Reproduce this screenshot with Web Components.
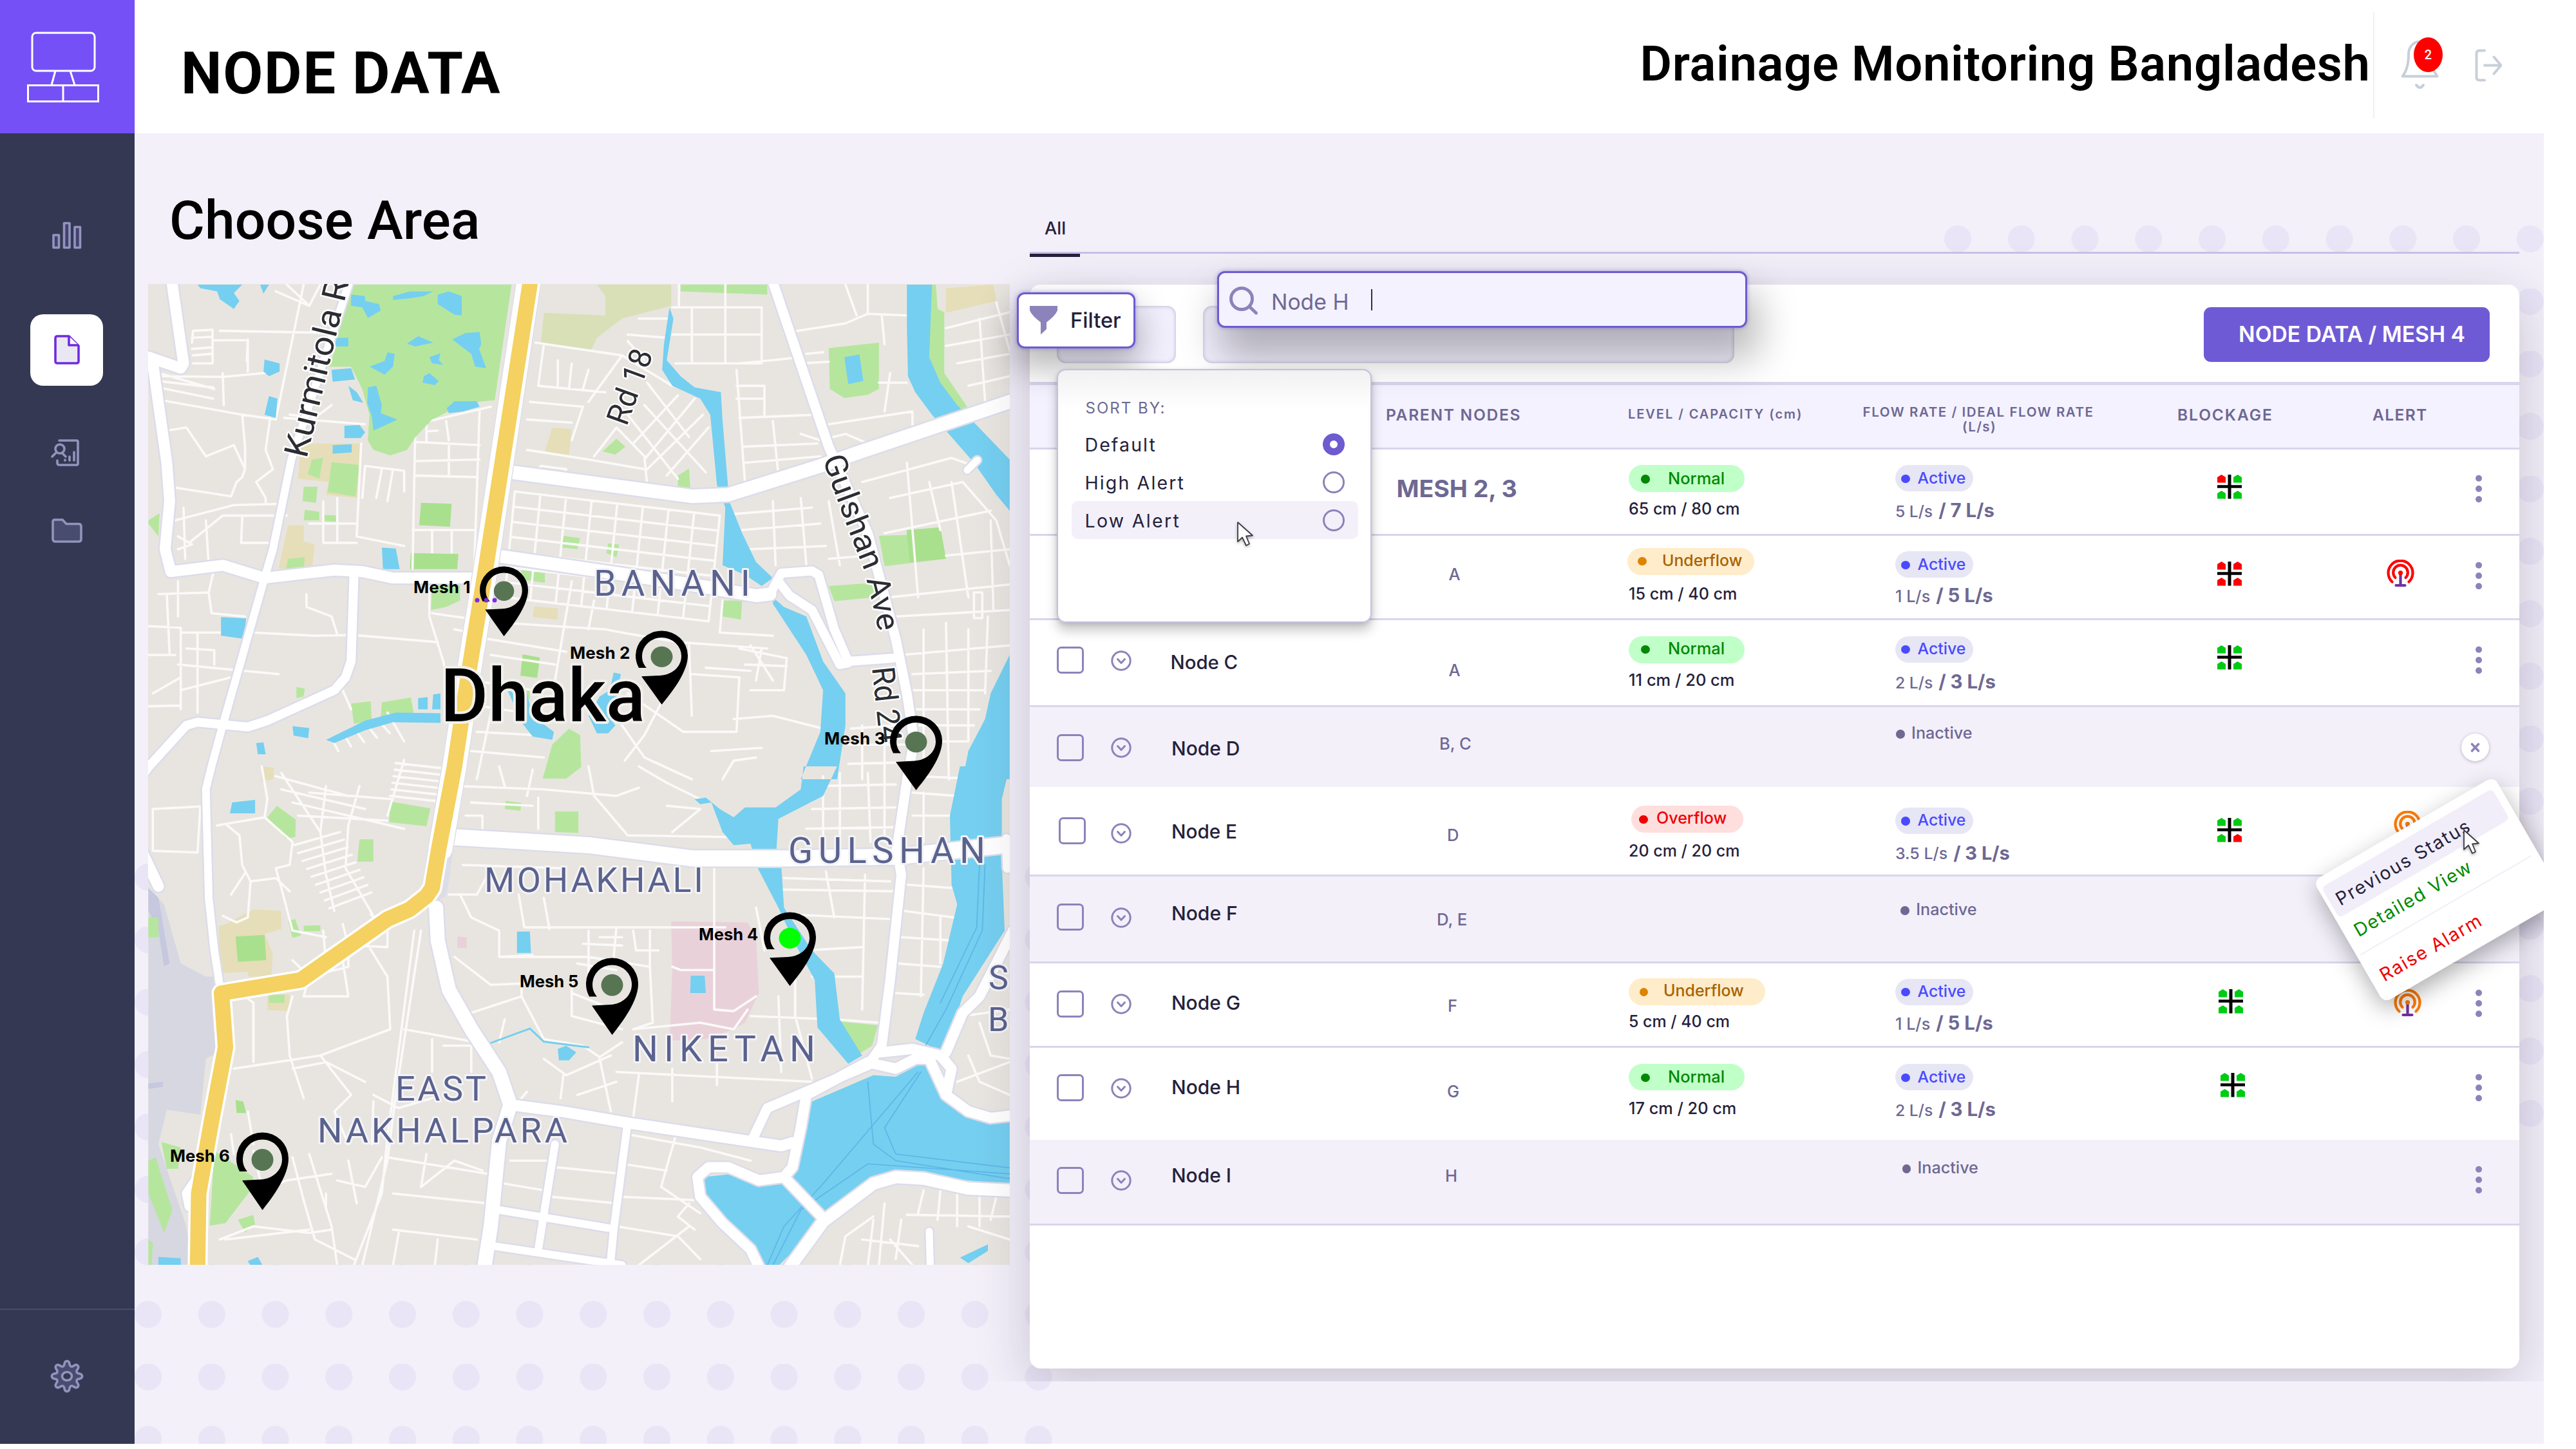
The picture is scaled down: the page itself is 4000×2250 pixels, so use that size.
<!DOCTYPE html>
<html lang="en">
<head>
<meta charset="utf-8">
<title>Node Data</title>
<style>
html,body{margin:0;background:#fff;}
body{font-family:Inter,"Liberation Sans",sans-serif;width:4000px;height:2250px;overflow:hidden;}
</style>
</head>
<body>
<app-shell></app-shell>
<script>
const BASE = { Inter: .864, Roboto: .8415 };
const ctx = document.createElement('canvas').getContext('2d');
const make = (el, css, html) => {
  const r = el.attachShadow({ mode: 'open' });
  r.innerHTML = `<style>*{box-sizing:border-box}${css}</style>${html}`;
  return r;
};

/* Single line of text. s = size, wt = weight, c = colour, f = family,
   w = width of the drawn glyphs, x = left inset, mt = space above.
   The width is reached by scaling the size a little; with "tr", by letter spacing alone. */
class UiText extends HTMLElement {
  connectedCallback() {
    if (this.shadowRoot) return;
    const a = n => this.getAttribute(n);
    const s = +a('s'), wt = a('wt') || 500, f = a('f') || 'Inter', txt = this.textContent;
    ctx.font = `${wt} ${s}px ${f}`;
    const m = ctx.measureText(txt), B = BASE[f];
    const side = m.width - m.actualBoundingBoxRight - m.actualBoundingBoxLeft;
    make(this, `:host{display:block;flex:none;width:max-content;white-space:pre;line-height:1;
      font-family:${f},sans-serif;font-size:var(--fs,${s}px);font-weight:${wt};color:${a('c') || 'inherit'};font-optical-sizing:none;
      letter-spacing:var(--ls,0px);margin-left:${((+a('x') || 0) + m.actualBoundingBoxLeft).toFixed(2)}px;
      margin-right:calc(-1 * var(--ls,0px));margin-top:calc(${(+a('mt') || 0).toFixed(2)}px + var(--up,0px));margin-bottom:var(--dn,0px);}`, `<slot></slot>`);
    if (a('w') && txt.length > 1) {
      const nat = (parseFloat(getComputedStyle(this).width) || m.width) - side, w = +a('w');
      const k = this.hasAttribute('tr') ? 1 : Math.min(1.08, Math.max(.95, w / nat));
      const d = s - s * k;
      this.style.setProperty('--fs', (s * k).toFixed(3) + 'px');
      this.style.setProperty('--up', (B * d).toFixed(3) + 'px');
      this.style.setProperty('--dn', ((1 - B) * d).toFixed(3) + 'px');
      this.style.setProperty('--ls', ((w - nat * k) / (txt.length - 1)).toFixed(3) + 'px');
    }
  }
}
customElements.define('ui-text', UiText);

/* Vertical run of texts whose baselines are given from the top of the run. */
const T = (txt, s, wt, c, w, o = {}) =>
  `<ui-text ${o.tr || o.f ? 'tr ' : ''}s="${s}" wt="${wt}" c="${c}" w="${w}" f="${o.f || 'Inter'}" x="${o.x || 0}" mt="${o.b === undefined ? (o.mt || 0) : o.b - (BASE[o.f || 'Inter']) * s}">${txt}</ui-text>`;

class SideNav extends HTMLElement {
  connectedCallback() {
    make(this, `:host{display:flex;flex-direction:column;width:209px;height:2242px;background:#343852;}
      .logo{height:207px;background:#7550f7;flex:none}
      svg{display:block}
      nav{flex:1;display:flex;flex-direction:column;align-items:center;padding-top:134px}
      .on{width:113px;height:111px;border-radius:20px;background:#fff;margin-top:97px;margin-left:-2px;display:flex;align-items:center;justify-content:center;padding-bottom:2px}
      .foot{height:210px;border-top:2px solid #484c6e;display:flex;justify-content:center;padding:76px 2px 0 0}
      .i{fill:#484c6e;stroke:#9195bd;stroke-width:3.6;stroke-linejoin:round;stroke-linecap:round}`,
    `<div class="logo"><svg width="209" height="207" fill="none" stroke="#fff" stroke-width="3">
        <rect x="50" y="51" width="97" height="59" rx="6"/><path d="M86 110L80 132M109 110L116 132"/>
        <rect x="43.500" y="132.500" width="109" height="25"/><path d="M98 132V158"/></svg></div>
     <nav>
      <svg width="50" height="50" class="i" style="fill:#46406f;margin-left:-2px">
        <rect x="4" y="24" width="8.500" height="19.500"/><rect x="20.500" y="5.500" width="8.500" height="38"/><rect x="37" y="11.500" width="8.500" height="32"/></svg>
      <div class="on"><svg width="44" height="48" viewBox="0 0 44 48" fill="#e9e8f2" stroke="#6f2be2" stroke-width="3.600" stroke-linejoin="round">
        <path d="M6 3H24L39 18V42Q39 45 36 45H6Q3 45 3 42V6Q3 3 6 3Z" transform="translate(1 0)"/><path d="M24 3V17H39" fill="#fff" transform="translate(1 0)"/></svg></div>
      <svg width="46" height="44" viewBox="0 0 46 44" style="margin-top:82px;margin-left:-8px" fill="none" stroke="#9195bd" stroke-width="3.600" stroke-linejoin="round" stroke-linecap="round">
        <path d="M14 3H41Q43 3 43 5V39Q43 41 41 41H14Q11 41 11 38V34"/><circle cx="15" cy="16" r="7"/><path d="M10 21L3 28M18 22L24 28"/><path d="M24 34V33M31 34V28M38 34V21" transform="translate(-1 0)"/></svg>
      <svg width="50" height="40" class="i" style="margin-top:79px;margin-left:-1px"><path d="M6 3H18L24 9.500H43Q47 9.500 47 13.500V33Q47 37 43 37H7Q3 37 3 33V6Q3 3 6 3Z"/></svg>
     </nav>
     <div class="foot"><svg width="54" height="54" viewBox="-27 -27 54 54" class="i" id="g"></svg></div>`);
    let d = '';
    for (let i = 0; i <= 128; i++) {
      const t = i / 128 * Math.PI * 2, v = Math.cos(8 * t);
      const r = 20 + 3.6 * Math.sign(v) * Math.pow(Math.abs(v), .6);
      d += `${i ? 'L' : 'M'}${(r * Math.cos(t)).toFixed(2)} ${(r * Math.sin(t)).toFixed(2)}`;
    }
    this.shadowRoot.getElementById('g').innerHTML = `<path d="${d}Z"/><ellipse rx="7.500" ry="6.500" fill="#343852"/>`;
  }
}
customElements.define('side-nav', SideNav);

class TopBar extends HTMLElement {
  connectedCallback() {
    make(this, `:host{display:flex;height:207px;background:#fff;padding-left:76px;flex:none}
      .gap{flex:1}
      .div{width:2px;height:165px;margin:19px 0 0 5px;background:#eaf3f5}
      .icons{position:relative;width:263px}
      svg{display:block}
      .badge{position:absolute;left:61px;top:58px;width:45px;height:54px;border-radius:50%;background:#f00;display:flex;justify-content:center}`,
    T('NODE DATA', 90, 700, '#000', 491, { b: 145.5, f: 'Roboto' }) + `<div class="gap"></div>` +
    T('Drainage Monitoring Bangladesh', 76, 600, '#000', 1125, { b: 125, f: 'Roboto' }) +
    `<div class="div"></div><div class="icons">
      <svg width="240" height="160" viewBox="3686 0 240 160" fill="none" stroke="#c8cfda" stroke-width="4" stroke-linecap="round" stroke-linejoin="round">
        <path d="M3729.500 118.500H3783.500C3777 110 3774.500 100 3774.500 84C3774.500 72 3767 64.500 3756.500 64.500C3746 64.500 3739 74 3739 84C3739 100 3736.500 110 3729.500 118.500Z"/>
        <path d="M3751 132Q3756.500 140 3762 132"/>
        <path d="M3857 78.500H3849Q3844.500 78.500 3844.500 83V120Q3844.500 124.500 3849 124.500H3857M3857 101.500H3882M3871.500 88.500L3882.500 101.500L3871.500 114.500"/></svg>
      <div class="badge">${T('2', 20, 500, '#fff', 11, { b: 33.500, f: 'Roboto' })}</div></div>`);
  }
}
customElements.define('top-bar', TopBar);

/* Pin with its label, placed on the map by centre and top. */
class MapPin extends HTMLElement {
  connectedCallback() {
    const n = k => +this.getAttribute(k);
    const sx = n('pw') / 81, sy = n('ph') / 120;
    make(this, `:host{position:absolute;left:${n('cx') - 230 - n('pw') / 2}px;top:${n('ty') - 441}px;display:block}
      svg{display:block;overflow:visible}
      .l{position:absolute;left:${n('lx') - n('cx') + n('pw') / 2}px;top:${n('ly') - n('ty') - .864 * 24}px;display:flex}`,
    `<svg width="${n('pw')}" height="${n('ph')}"><g transform="scale(${sx} ${sy})">
      <path d="M5 60C1.500 53 0 47 0 40A40.500 40.500 0 0 1 81 40C81 66 58 98 40.500 120L9 74L38 72.500C57 71.500 71 58 71 41A30.500 30.500 0 0 0 10 41C10 48 12 54 17 60Z"/>
      <circle cx="40.500" cy="42" r="17" fill="${this.getAttribute('dot') || '#587553'}"/></g></svg>
     <div class="l">${T(this.getAttribute('name'), 24, 700, '#000', n('lw'))}</div>`);
  }
}
customElements.define('map-pin', MapPin);

/* Map geometry: U = northern sheet, L = southern sheet, each on its own grid. */
const pt = (k, x, y) => [220 + x / 1.153, k === 'U' ? 430 + y / 2.0103 : 1190 + y / 1.96];
const path = str => {
  let k = 'U', out = '', first = true;
  for (const tok of str.trim().split(/\s+/)) {
    if (tok === 'U' || tok === 'L') { k = tok; continue; }
    const [x, y] = tok.split(',').map(Number), p = pt(k, x, y);
    out += `${first ? 'M' : 'L'}${p[0].toFixed(1)} ${p[1].toFixed(1)}`;
    first = false;
  }
  return out;
};
const grid = (k, q, n, m) => {
  const L = (a, b, t) => [a[0] + (b[0] - a[0]) * t, a[1] + (b[1] - a[1]) * t];
  let s = '';
  for (let i = 0; i <= n; i++) { const a = L(q[0], q[1], i / n), b = L(q[3], q[2], i / n); s += `;${k} ${a} ${b}`; }
  for (let i = 0; i <= m; i++) { const a = L(q[0], q[3], i / m), b = L(q[1], q[2], i / m); s += `;${k} ${a} ${b}`; }
  return s;
};
const polys = (fill, list) => `<path fill="${fill}" d="${list.split(';').filter(s => s.trim()).map(s => path(s) + 'Z').join('')}"/>`;
const lines = (w, c, list) => `<path fill="none" stroke="${c}" stroke-width="${w}" stroke-linejoin="round" stroke-linecap="round" d="${list.split(';').filter(s => s.trim()).map(path).join('')}"/>`;

const LIME = `U 815,24 948,24 948,90 860,130 815,190 805,228 715,205 720,112 830,120 830,60`;
const SAND = `U 1440,35 1525,24 1530,75 1440,112;U 735,470 770,475 765,557 722,545;U 703,1028 745,1035 745,1070 700,1062;
 U 285,520 393,520 388,690 330,680 335,640 280,630;U 262,775 290,775 290,825 310,835 305,910 245,910;
 L 150,480 200,435 250,440 250,495 220,510 235,570 232,640 190,640 190,625 140,630 138,485;L 225,695 265,695 265,745 225,742;L 215,0 237,5 235,40 215,45`;
const AIR = `L 12,370 40,420 70,600 115,640 138,640 150,860 115,890 105,1060 45,1045 30,1150 80,1400 90,1520 12,1520`;
const AIR2 = `L 12,370 30,400 50,600 40,608 30,500 12,440;L 12,965 38,960 38,975 12,982`;
const PINK = `L 565,518 582,520 582,553 565,553;L 948,472 1085,475 1100,520 1105,690 1080,780 1060,800 1010,830 945,835 950,620`;
const GREEN = `U 375,24 662,24 632,385 600,390 560,410 520,445 490,500 475,540 445,557 415,540 405,510 408,430 395,350 375,280 335,280 355,190 340,185 355,120;
 U 965,24 1120,24 1120,55 965,45;U 1230,222 1320,205 1320,350 1300,368 1258,378 1232,350;U 1405,24 1422,24 1425,100 1437,110 1437,300 1480,410 1450,415 1420,330 1400,250;
 U 1230,965 1310,955 1312,1000 1240,1012;U 1040,1010 1075,1010 1073,1070 1040,1060;
 U 960,620 980,598 982,658 960,655;U 850,505 866,530 848,555 825,545;U 755,808 785,815 780,850 750,845;U 835,832 855,835 850,875 832,862;
 U 680,915 722,925 722,955 680,945;U 520,960 570,960 570,1010 545,1030 518,1040;
 U 375,1332 410,1325 412,1385 380,1395;U 430,1328 482,1313 487,1360 428,1375;U 277,1280 292,1285 290,1310 277,1315;
 U 765,1410 785,1430 787,1530 760,1566 718,1566 735,1460;U 305,570 325,565 318,630 297,615;
 U 290,655 315,655 312,705 288,700;U 292,727 318,733 318,760 290,760;U 327,743 352,745 350,765 327,762;U 262,880 292,875 290,915 258,915;U 12,760 32,738 30,810 12,770;
 L 445,107 517,128 510,182 443,170;L 390,222 415,222 415,290 386,290;L 242,120 276,162 275,215 258,220 225,155;L 652,105 680,112 678,135 650,130;
 L 740,137 782,137 782,203 740,200;L 262,470 275,465 285,515 270,522;L 290,485 320,483 320,502 290,502;
 L 228,695 256,695 256,720 228,720;L 12,460 30,460 30,520 12,520;L 1243,775 1318,788 1308,850 1275,885;L 35,1143 70,1160 65,1225 45,1225;
 L 12,1200 25,1190 55,1350 40,1420 12,1300;L 130,1170 200,1250 195,1290 150,1390 122,1398;L 172,1380 200,1365 203,1395 185,1418;L 12,1440 20,1450 18,1520 12,1520;
 U 1320,808 1370,805 1370,790 1430,782 1440,880 1330,903;U 340,578 390,587 383,685 333,672;U 670,1270 695,1290 695,1320 675,1290`;
const GREEN2 = `U 1370,805 1370,790 1430,782 1440,880 1375,890;U 500,705 555,708 552,780 497,775;U 482,862 567,865 565,912 480,912;U 682,1178 713,1188 708,1252 678,1245;L 168,518 220,513 223,590 172,595;L 168,1015 182,1020 187,1055 170,1055`;
const WATER = `U 1370,24 1415,24 1410,250 1430,330 1460,400 1510,490 1554,570 1554,730 1530,680 1490,580 1440,480 1415,430 1385,360 1372,310 1370,150;
 U 945,95 952,130 940,260 965,310 990,345 1037,360 1040,450 1052,700 1075,800 1100,890 1130,940 1110,965 1080,930 1040,900 1045,720 1030,650 1018,430 1000,380 950,340 932,290 935,210;
 U 1130,1000 1150,1030 1190,1060 1220,1200 1260,1300 1260,1400 1245,1568 1180,1568 1215,1420 1220,1290 1190,1180 1130,1020;
 L 1185,0 1180,70 1135,125 1080,125 1060,155 1035,130 1010,95 990,100 1000,115 1020,110 1040,200 1060,240 1090,235 1095,265 1136,265 1140,160 1220,90 1245,0;
 L 1100,300 1145,300 1150,430 1200,560 1240,630 1250,770 1290,880 1265,905 1210,795 1205,650 1170,540 1140,430;
 U 1554,1180 1520,1300 1510,1380 1480,1480 1470,1568 1554,1568;
 L 1465,0 1447,150 1450,360 1460,420 1435,600 1400,750 1385,830 1435,870 1450,800 1470,700 1545,500 1540,290 1540,100 1554,0;
 L 1310,940 1350,945 1400,900 1430,990 1470,1060 1554,1080 1554,1275 1480,1260 1350,1230 1300,1270 1240,1340 1220,1385 1140,1520 1110,1520 1090,1460 1010,1330 1005,1250 1060,1240 1110,1270 1150,1260 1175,1180 1200,1020;
 U 1258,250 1285,242 1292,325 1265,335;U 100,24 180,24 165,50 175,75 165,100 140,70 135,45 105,35;U 212,24 228,24 218,52;U 220,258 247,270 247,295 228,310 218,295;U 228,372 243,380 240,440 220,430;
 U 347,190 370,190 370,217 347,217;U 340,290 375,285 382,320 342,327;U 370,340 385,360 397,393 378,385;U 405,345 420,340 430,400 428,425 458,445 440,460 415,480 412,435 404,395;
 U 363,465 390,462 400,485 392,503 363,503;U 342,525 376,522 376,548 342,552;U 375,55 400,60 400,75 425,85 428,105 405,128 395,95 375,90;
 U 450,60 480,45 522,45 505,60 480,67 450,72;U 530,55 550,45 573,60 573,120 560,118 530,85;U 475,208 495,185 522,205 490,217;
 U 556,195 580,175 605,172 608,210 604,225 617,285 597,280 590,240;U 408,280 435,262 440,235 453,240 450,280 435,305;U 515,250 535,238 532,260 540,275 520,270;
 U 505,310 515,300 532,325 525,338 503,330;U 546,410 560,388 600,388 605,405 575,420 550,425;U 142,1062 187,1066 183,1130 142,1120;U 430,845 455,848 462,912 432,912;
 U 270,1402 300,1408 298,1440 272,1432;U 330,1445 400,1385 455,1360 535,1362 535,1392 450,1390 400,1415 345,1455;U 495,1315 512,1312 512,1350 495,1350;U 522,1303 535,1300 535,1350 520,1350;
 U 650,1270 690,1300 700,1370 738,1420 735,1445 700,1435 680,1390 665,1330;U 845,1235 858,1240 850,1310 840,1380 848,1400 835,1425 815,1425 800,1370 820,1310 838,1290;U 205,1455 218,1453 222,1490 208,1490;
 L 162,110 203,102 203,143 158,143;L 672,503 695,503 697,568 672,568;L 983,637 1008,637 1010,690 982,690;L 745,860 760,850 778,870 765,895 747,895;
 L 30,1493 70,1497 70,1520 30,1520;L 190,1505 208,1493 217,1520 195,1520;L 1465,1495 1515,1455 1515,1475 1480,1512`;
let ribs = '';
for (let k = 0; k < 9; k++) ribs += `;L ${272 + k * 8},${240 + k * 24} ${355 + k * 7},${200 + k * 23}`;
for (let k = 0; k < 6; k++) ribs += `;L ${455 - k * 2},${-10 + k * 20} ${535 - k * 2},${5 + k * 20}`;
for (let k = 0; k < 5; k++) ribs += `;U ${340 + k * 22},${1440 - k * 12} ${352 + k * 23},${1480 - k * 14}`;
const STREETS = `U 140,168 350,175;U 90,205 92,168 127,165 127,270 92,270;U 90,190 125,187;U 90,225 125,220;U 92,245 125,240;U 190,195 190,295;U 130,198 190,197 188,262;U 30,300 130,350;U 30,325 128,345;U 30,345 128,380;U 30,310 145,312 220,300;
 U 20,380 180,430 240,445;U 145,300 147,400;U 45,480 80,470 115,560 165,525 185,600 180,625 170,640 160,685 50,655;U 180,430 185,530 185,600;U 290,24 240,445;U 260,24 300,90 320,24;U 240,45 300,90;
 U 230,440 222,540 235,600 205,640 222,690 222,710;U 60,760 165,712 260,708;U 85,830 145,745 260,745;U 180,750 178,830 230,830;U 65,810 90,835 65,850;U 115,760 120,900;U 75,720 78,880;U 255,440 400,460;U 310,440 340,400;U 265,430 310,440;
 U 393,520 385,810 470,840;U 325,700 325,830 385,830;U 350,690 350,830;U 300,770 385,770;U 400,590 470,605 470,670;U 430,600 420,690;U 450,600 440,700;U 400,590 395,690;U 490,460 485,910;U 490,515 605,525;U 490,575 605,570;U 488,620 600,625;
 U 485,790 595,790;U 510,440 510,515;U 510,482 530,480;U 545,450 550,510;U 490,460 625,405;U 550,520 550,620;U 520,790 520,860;U 555,790 555,860;U 605,420 595,930;U 705,205 860,245 950,340;U 695,390 790,405 770,510;U 720,210 710,340 830,360;U 745,260 745,340;U 770,270 765,350;U 800,290 790,350;
 U 690,540 800,570 900,600;U 690,445 770,455;U 860,245 800,390;U 810,560 850,470;U 850,470 900,560 905,650;U 880,520 960,370;U 900,570 990,380;U 905,600 1005,430;U 940,620 1015,470;U 870,430 960,630;U 900,400 1010,610;U 905,330 980,500;
 U 950,95 1110,95 1110,270 955,270;U 950,180 1110,180;U 985,100 985,265;U 1045,24 1045,270;U 890,130 950,130;U 870,180 940,190;U 870,200 900,260;U 962,24 962,95;U 1065,340 1115,340 1115,430;U 1065,380 1115,380;U 1070,270 1130,260 1180,250;U 1065,290 1080,640;U 1130,450 1140,620;U 1075,530 1210,520;U 1080,580 1215,560;U 1070,440 1210,430;
 U 1150,175 1260,145 1300,115 1370,120;U 1180,270 1230,265;U 1260,24 1280,120;U 1300,24 1300,115;U 1230,460 1380,420 1380,500;U 1320,330 1370,330;U 1325,120 1330,210;U 1340,300 1330,420;U 1190,240 1220,235;U 1180,490 1215,510 1260,490 1300,520;
 U 1440,160 1554,110;U 1440,215 1554,180;U 1460,270 1554,240;U 1480,340 1554,310;U 1500,130 1510,390;U 1530,80 1554,230;U 1290,640 1450,565 1490,590;U 1340,690 1470,640 1530,760 1554,900;U 1370,580 1390,1000;U 1410,640 1430,790;U 1450,640 1480,1000;U 1330,800 1520,730;U 1440,870 1554,850;U 1340,1000 1554,960;U 1350,1060 1554,1040;U 1490,985 1490,1065 1505,1065 1505,985 1490,985;U 1520,760 1525,1040;
 U 1360,1180 1554,1150;U 1400,1100 1400,1500;U 1440,1080 1445,1568;U 1480,1100 1480,1450;U 1515,1060 1510,1300;U 1380,1240 1520,1230;U 1380,1290 1510,1290;U 1380,1350 1500,1350;U 1380,1400 1490,1400;U 1430,1450 1480,1450;U 1270,1410 1350,1400;U 1265,1460 1370,1460;U 1265,1520 1370,1515;U 1290,1400 1290,1568;U 1330,1400 1330,1568;
 U 1060,740 1200,720;U 1075,790 1215,770;U 1090,850 1225,840;U 1130,700 1135,900;U 1180,690 1190,900;U 1230,700 1250,900;U 1230,880 1300,870;
 U 650,1080 830,1100 860,1110 960,1140 1120,1160;U 620,1130 760,1170;U 625,1180 740,1210;U 770,950 740,1260;U 810,1010 800,1100;U 1040,1010 1035,1110 1130,1120;U 980,1150 985,1370;U 985,1240 1070,1250;U 1070,1250 1065,1420 970,1420 870,1300;U 1060,1380 1130,1370 1220,1410;
 U 1070,1160 1155,1190 1150,1290 1090,1290;U 1090,1150 1130,1260;U 1080,1210 1155,1215;U 1110,1160 1100,1260;U 1010,1220 1090,1230;U 930,1330 900,1430 865,1510;U 860,1400 900,1500 985,1568;U 1040,1568 1060,1510 1100,1500;U 1020,1480 1110,1470;
 U 30,990 120,985 130,910;U 65,950 65,1060;U 12,1090 70,1095 70,1350;U 120,985 125,1050 185,1060;U 70,1110 200,1110 310,1120 380,1118 530,1140;U 80,1160 130,1165 130,1210;U 100,1110 100,1360;U 12,1180 60,1180;U 65,1210 245,1240;U 12,1340 70,1338;U 70,1290 160,1250;U 45,990 50,1180;U 295,990 295,1030 340,1060 350,1115;
 U 360,1290 375,1350;U 515,950 515,1060 540,1200 545,1240;U 520,1050 600,1070;U 560,1100 590,1110;U 20,1300 70,1250;U 440,1360 470,1450;U 595,1260 700,1290;U 610,1340 680,1360;U 600,1420 700,1430;U 590,1480 720,1500;U 640,1240 600,1568;
 L 330,60 320,200 330,330 345,440;L 420,470 365,310 370,180 390,60;L 240,30 370,90;L 250,70 400,130;L 470,-20 440,150;L 250,20 320,200;L 300,80 450,100;L 270,110 470,190;L 280,150 440,165;
 L 20,130 105,122 100,262 20,257 20,130;L 135,180 185,165 220,155;L 150,175 175,210 180,300 195,350 190,460 170,475 145,455;L 160,390 185,325;L 215,0 225,100 220,155;L 220,155 270,230 265,300 240,310 250,370 270,500 330,520;L 195,350 240,340 265,380;
 L 325,500 330,600;L 360,480 370,545 440,550 440,500 410,450;L 270,590 300,640 290,700 370,700 360,590;L 300,640 370,610 370,540;L 170,680 200,720 200,900;L 165,920 320,880 445,800 440,640 400,530;L 270,700 260,760 265,880 290,1010;
 L 320,880 375,1000 345,1050 370,1150;L 270,920 330,900 400,960;L 488,500 440,1130 430,1300 380,1518;L 500,500 455,1000 440,1200 395,1518;L 470,800 600,840;L 440,1190 620,1240;L 450,1300 620,1330;L 450,1410 600,1440;
 L 520,830 520,930;L 540,850 590,850 590,930;L 415,1000 460,1040 520,1010;L 300,1180 340,1400 350,1518;L 270,1190 290,1320 310,1440 380,1500;L 350,1260 400,1280 430,1190;L 200,1300 260,1260 340,1240;L 140,1440 200,1400 300,1420 340,1410;
 L 510,1180 500,1280 560,1200 610,1230;L 160,1120 165,1180;L 190,1050 200,1150;L 330,1300 330,1350;L 370,1200 385,1330;L 530,1440 525,1518;L 460,1420 450,1518;L 200,1170 215,1280;L 415,1020 412,1150;L 150,1440 300,1410;
 L 570,60 720,70 850,90 890,65;L 700,10 690,90;L 710,95 710,190;L 640,0 650,60;L 800,0 810,90 870,210;L 580,150 610,150 610,190;L 590,110 700,120;L 870,210 1050,215;L 890,0 940,50 1000,100;L 940,120 1000,130 950,200;L 575,300 760,310;
 L 620,330 600,390 550,390;L 570,390 590,460 640,500 640,580 700,575;L 560,580 625,665 690,660;L 675,390 685,490 830,490 950,490;L 720,400 730,495;L 640,580 800,580 910,610;L 590,750 680,700 680,660;L 680,700 720,830 790,850 820,885;
 L 820,885 860,840;L 770,640 770,760 860,800;L 800,500 800,640;L 850,490 845,580;L 820,520 860,520;L 880,500 885,560 925,560;L 910,500 910,610 915,780 880,800;L 770,690 830,730;L 790,540 860,545;L 780,600 850,620;L 945,490 1045,490;
 L 1025,305 1025,740 1060,745 1100,700;L 950,610 965,620 1025,620;L 880,800 1000,780 1060,800 1085,740;L 820,890 840,1050;L 850,930 1200,960;L 890,940 880,1070;L 950,920 950,1020;L 1030,900 1030,970;L 1090,760 1240,770 1320,780;
 L 1140,700 1145,930;L 1170,600 1170,760 1200,950;L 1100,430 1115,560;L 720,890 760,940 840,880;L 755,940 750,1010;L 780,1000 850,960;L 690,990 670,1030;L 650,770 640,840;
 L 870,1120 1000,1160 1090,1200;L 860,1210 940,1230;L 860,1310 990,1320;L 850,1400 960,1430 1000,1500;L 960,1100 930,1280 1000,1360;L 980,1330 960,1370 990,1410;L 890,1518 980,1400;L 660,1200 730,1200;L 650,1270 720,1290;L 740,1220 860,1240;L 735,1310 850,1330;
 L 1220,30 1220,230;L 1250,20 1250,230;L 1300,20 1305,230;L 1330,0 1330,230;L 1210,60 1350,55;L 1200,130 1350,125;L 1190,190 1350,185;L 1145,375 1345,380;L 1150,450 1345,465;L 1190,560 1290,550;L 1295,330 1290,740;L 1225,320 1240,460;L 1200,640 1290,640;
 L 1150,340 1340,350;L 1400,80 1400,230;L 1380,30 1460,35;L 1380,80 1460,90;L 1380,150 1450,150;L 1370,360 1450,370;L 1400,310 1395,700;L 1365,440 1455,460;L 1360,520 1450,530;L 1355,600 1430,610;L 1350,690 1400,695;L 1430,460 1430,600;
 L 1330,1330 1320,1518;L 1310,1380 1300,1518;L 1400,1290 1390,1360;L 1430,1290 1425,1380;L 1460,1300 1460,1400;L 1500,1310 1500,1400;L 1530,1310 1520,1380;L 1370,1365 1554,1370;L 1480,1400 1554,1440;L 1340,1440 1380,1518;L 1360,1380 1350,1500;L 1250,1518 1260,1430 1310,1370;L 1290,1440 1390,1460;
 L 1480,880 1500,960 1554,1000;L 1460,960 1554,900;L 1500,780 1520,880 1554,890;L 1470,760 1554,740
 ` + ribs + grid('U', [[668, 670], [1035, 745], [1015, 1075], [650, 1000]], 8, 7) + grid('U', [[715, 590], [760, 600], [745, 640], [700, 630]], 1, 1);
const ROADS = [
 [17, `U 52,-10 75,270 70,285 12,250;U 20,270 45,580 50,700 42,850 52,920 145,900 220,940 345,915 395,920 450,940 600,940`],
 [12, `U 375,0 268,570 235,850 220,940 145,1400 125,1528 L 115,70 120,400 130,560 140,670`],
 [14, `U 380,930 375,1200 365,1250 345,1290 225,1385 190,1405 100,1390 80,1400 12,1530 0,1560`],
 [17, `L -5,240 30,365`],
 [21, `U 655,608 985,685 1050,680 1215,590 1280,550 1570,380`],
 [15, `U 1125,-10 1230,530 1300,800 1350,1130 1370,1300 1383,1450 L 1372,20 1352,250 1360,330 1340,650 1325,850 1300,910 1120,1040 1095,1130`],
 [20, `U 635,870 850,925 1000,965 1100,995 1125,990`],
 [14, `U 1125,990 1145,925 1200,918 1212,930 1240,1100 1265,1200 1345,1190;U 1140,950 1160,995 1200,1040 1250,1210 1265,1205`],
 [25, `L 555,215 800,240 985,280 1150,280 1350,275 1570,235`],
 [22, `L 527,430 530,530 550,680 590,800 640,930 660,1030 640,1140 625,1400 612,1540`],
 [17, `L 660,1030 750,1050 870,1085 1085,1140 1145,1155 1165,1145`],
 [12, `L 870,1085 845,1410 840,1500;L 740,1150 710,1470;L 640,1350 835,1405;L 630,1460 860,1518`],
 [16, `L 1300,900 1190,1000 1180,1100 1165,1220 1150,1250 1105,1260 1050,1220 1015,1220 995,1250 1000,1310 1040,1390 1090,1470 1107,1530;L 1150,1250 1220,1375`],
 [19, `L 1158,1530 1220,1385 1310,1270 1350,1250 1400,1255 1480,1285 1570,1292`],
 [16, `L 1325,870 1380,860 1430,880 1450,920 1440,1000 1480,1050 1520,1070 1570,1060;L 1310,905 1350,920 1385,890 1410,890 1440,1000;L 1440,870 1470,750 1500,700 1560,500`],
 [11, `U 1478,603 1496,572;L 1410,1415 1412,1530`],
 [14, `L 100,1250 80,1300 85,1340;L 1548,220 1550,310`]
];

class AreaMap extends HTMLElement {
  connectedCallback() {
    const lab = (x, y, w, s, t) => `<text x="${x}" y="${y}" font-size="${s}" textLength="${w}" fill="#5a628e" stroke="#f4f3f6" stroke-width="6">${t}</text>`;
    const yel = `U 698,-10 615,920 585,1240 560,1528 L 532,250 520,370 510,395 480,435 440,465 285,650 143,690 150,855 125,1080 102,1300 100,1540`;
    const SG = 'lengthAdjust="spacingAndGlyphs"';
    make(this, `:host{display:block;position:relative;width:1338px;height:1523px;overflow:hidden}
      svg{display:block} text{paint-order:stroke;stroke-linejoin:round;font-family:Roboto,sans-serif}`,
    `<svg width="1338" height="1523" viewBox="230 441 1338 1523">
      <rect x="230" y="441" width="1338" height="1523" fill="#e8e5e0"/>
      ${polys('#d9e0b8', LIME)}${polys('#e6deb8', SAND)}${polys('#d6d7e1', AIR)}${polys('#c5c8de', AIR2)}${polys('#e9d1da', PINK)}${polys('#b6e69e', GREEN)}${polys('#a9e08e', GREEN2)}
      ${lines(3.6, '#fbfaf9', STREETS)}
      ${polys('#b6e69e', GREEN.split(';')[0])}
      ${lines(3, '#75cff0', 'L 620,845 695,798 720,838 800,855')}${polys('#75cff0', WATER)}
      ${lines(1.6, '#5cb4e6', 'L 1395,930 1330,1100 1350,1180 1554,1222;L 1300,960 1310,1150 1350,1200 1554,1255;L 1390,930 1220,1270 1150,1400 1120,1518;L 1554,1240 1300,1210 1180,1350 1130,1518;L 1510,300 1505,500 1440,740 1400,860;L 1500,300 1495,490 1430,720')}
      ${ROADS.map(([w, p]) => lines(w + 5, '#dcdcea', p)).join('')}
      ${ROADS.map(([w, p]) => lines(w, '#fff', p)).join('')}
      ${lines(40, '#dddde8', 'U 695,-10 615,920 585,1240 560,1528 L 535,250 525,370')}${lines(37, '#fff', 'U 695,-10 615,920 585,1240 560,1528 L 535,250')}
      ${lines(31, '#fff', yel)}${lines(24, '#f4d160', yel)}
      <g fill="#2c2d33" stroke="#fff" stroke-width="5" font-size="52">
        <text transform="translate(476 713) rotate(-76.500)" textLength="283" ${SG}>Kurmitola R</text>
        <text transform="translate(973 663) rotate(-70)" textLength="121" font-size="49" ${SG}>Rd 18</text>
        <path id="gp" fill="none" stroke="none" d="M1277 712Q1308 800 1338 875Q1352 920 1366 990"/>
        <text textLength="284" font-size="49" ${SG}><textPath href="#gp">Gulshan Ave</textPath></text>
        <text transform="translate(1354 1037) rotate(84)" textLength="118" font-size="49" ${SG}>Rd 24</text></g>
      <text x="684" y="1120" font-size="115" font-weight="500" textLength="318" ${SG} fill="#000" stroke="#f2f0ec" stroke-width="8">Dhaka</text>
      ${lab(922, 925, 243, 56, 'BANANI')}${lab(752, 1385, 340, 54, 'MOHAKHALI')}${lab(1224, 1340, 306, 56, 'GULSHAN')}${lab(982, 1648, 284, 56, 'NIKETAN')}
      ${lab(614, 1709, 141, 54, 'EAST')}${lab(493, 1774, 388, 54, 'NAKHALPARA')}${lab(1535, 1536, 31, 52, 'S')}${lab(1534, 1601, 32, 52, 'B')}
     </svg>
     <map-pin name="Mesh 1" cx="782" ty="880" pw="75" ph="108" lx="643" ly="921" lw="86"></map-pin>
     <map-pin name="Mesh 2" cx="1027.500" ty="980" pw="81" ph="114" lx="886" ly="1023" lw="91"></map-pin>
     <map-pin name="Mesh 3" cx="1422" ty="1112" pw="81" ph="115" lx="1281" ly="1156" lw="93"></map-pin>
     <map-pin name="Mesh 4" cx="1226" ty="1417" pw="81" ph="114" lx="1086" ly="1460" lw="91" dot="#00ff00"></map-pin>
     <map-pin name="Mesh 5" cx="950" ty="1488" pw="81" ph="119" lx="808" ly="1533" lw="90"></map-pin>
     <map-pin name="Mesh 6" cx="407" ty="1759" pw="81" ph="120" lx="265" ly="1804" lw="91"></map-pin>
     <svg width="60" height="10" viewBox="736 927 60 10" style="position:absolute;left:506px;top:486px" fill="#7d2ae8"><circle cx="741" cy="932" r="3.500"/><circle cx="755" cy="932" r="3.500"/><circle cx="768" cy="932" r="3.500"/></svg>`);
  }
}
customElements.define('area-map', AreaMap);

/* Status pill with a dot and a slotted label. */
class StatusPill extends HTMLElement {
  connectedCallback() {
    const a = n => this.getAttribute(n);
    make(this, `:host{display:flex;align-items:flex-start;width:${a('w')}px;height:${a('h') || 41.5}px;border-radius:21px;background:${a('bg')};margin-left:${a('x') || 0}px;margin-top:${a('mt')}px;flex:none}
      i{width:13.500px;height:13.500px;border-radius:50%;background:${a('dot')};margin:${a('dy')}px 0 0 ${a('dx') - 7}px;flex:none}`, `<i></i><slot></slot>`);
  }
}
customElements.define('status-pill', StatusPill);

class BlockageIcon extends HTMLElement {
  connectedCallback() {
    const c = [...this.getAttribute('v')].map(k => k === 'r' ? '#ff0000' : '#00cb14');
    const h = (x, y, i) => `<path fill="${c[i]}" d="M${x} ${y + 4}L${x + 6.5} ${y}L${x + 13} ${y + 4}V${y + 12.5}H${x}Z"/>`;
    make(this, `:host{display:block;width:39px;height:38px}svg{display:block}`,
      `<svg width="39" height="38">${h(0, 0, 0)}${h(25, 0, 1)}${h(0, 25, 2)}${h(25, 25, 3)}<path d="M16.500 0H21.500V37.500H16.500ZM0 16.300H38V20.800H0Z"/></svg>`);
  }
}
customElements.define('blockage-icon', BlockageIcon);

class AlertIcon extends HTMLElement {
  connectedCallback() {
    const c = this.getAttribute('c');
    make(this, `:host{display:block}svg{display:block}`,
      `<svg width="43" height="43" fill="none" stroke="${c}" stroke-width="4.200" stroke-linecap="round">
        <path d="M8.500 34.500A19 19 0 1 1 34.500 34.500"/><path d="M13.500 28A11.300 11.300 0 1 1 29.500 28"/>
        <path d="M21.500 22V39.500M14.500 40H28.500" stroke="#7030a0"/><circle cx="21.500" cy="20.500" r="3.600" fill="${c}" stroke="none"/></svg>`);
  }
}
customElements.define('alert-icon', AlertIcon);

const P = '#6e6893', DK = '#25213b', PU = '#8b83ba';
const ST = { n: ['#c1ffc9', '#008900', '#008900', 'Normal'], u: ['#ffecca', '#dd8300', '#a86200', 'Underflow'], o: ['#ffdede', '#ee0000', '#ee0000', 'Overflow'] };
/* One table row: h height, tone background; the rest are per-column settings measured from the row top. */
class NodeRow extends HTMLElement {
  set data(d) {
    const y0 = d.y, cells = { check: '', chev: '', name: '', parent: '', level: '', flow: '', block: '', alert: '', more: '' };
    if (d.chk) cells.check = `<div class="box" style="margin:${d.chk - y0}px 0 0 ${d.chkx || 42}px"></div>`;
    if (d.chev) cells.chev = `<svg width="32" height="32" style="margin-top:${d.chev - y0 - 16}px" fill="none" stroke="${PU}" stroke-width="3" stroke-linecap="round" stroke-linejoin="round"><circle cx="16" cy="16" r="14.200"/><path d="M10.500 13.500L16 19.500L21.500 13.500"/></svg>`;
    if (d.name) cells.name = T(d.name[0], 28, 500, DK, d.name[2], { b: d.name[1] - y0, x: d.name[3] || 2 });
    if (d.par) cells.parent = T(d.par[0], d.par[4] || 25.5, d.par[5] || 500, P, d.par[2] - d.par[1], { b: d.par[3] - y0, x: d.par[1] - 2149 });
    if (d.lev) {
      const [k, px, pw, py, dx, tx, tw, tb, val, vw, vb] = d.lev, s = ST[k];
      cells.level = `<status-pill x="${px - 2366}" w="${pw}" mt="${py - y0}" bg="${s[0]}" dot="${s[1]}" dx="${dx - px}" dy="${tb - py - 14.5}">${T(s[3], 24.5, 500, s[2], tw, { b: tb - py, x: tx - dx - 6.5 })}</status-pill>` +
        T(val, 24, 500, DK, vw, { x: 164, b: vb - py - 41.5 });
    }
    if (d.act) {
      const [py, tb, v1, w1, v2, x2, w2, vb] = d.act;
      cells.flow = `<status-pill w="121" h="41" mt="${py - y0}" bg="#e6e6f5" dot="#4a4aff" dx="16" dy="${tb - py - 14.5}">${T('Active', 24.5, 500, '#4a4aff', 74.5, { b: tb - py, x: 12 })}</status-pill>
        <div class="v">${T(v1, 24.5, 500, P, w1, { x: 1, b: vb - py - 41 })}${T(v2, 28, 700, P, w2, { x: x2, b: vb - py - 41 })}</div>`;
    }
    if (d.ina) cells.flow = `<div class="v"><i style="margin:${d.ina[1] - y0 - 15}px 0 0 ${d.ina[0] - 2943 - 6.5}px"></i>${T('Inactive', 24.5, 500, P, 93, { x: 11.5, b: d.ina[1] - y0 })}</div>`;
    if (d.blk) cells.block = `<blockage-icon v="${d.blk[0]}" style="margin:${d.blk[1] - y0}px 0 0 ${d.blk[2] - 3443}px"></blockage-icon>`;
    if (d.alr) cells.alert = `<alert-icon c="${d.alr[0]}" style="margin:${d.alr[1] - y0}px 0 0 ${d.alr[2] - 3706}px"></alert-icon>`;
    if (d.more) cells.more = `<svg width="12" height="46" style="margin:${d.more - y0 - 23}px 0 0 13px" fill="${PU}"><circle cx="6" cy="6.700" r="5"/><circle cx="6" cy="23" r="5"/><circle cx="6" cy="39.300" r="5"/></svg>`;
    if (d.close) cells.more = `<div class="x" style="margin-top:${d.close - y0 - 21.5}px"><svg width="43" height="43" stroke="${PU}" stroke-width="3.600" stroke-linecap="round"><path d="M16.500 16.500L26.500 27M26.500 16.500L16.500 27"/></svg></div>`;
    make(this, `:host{display:grid;grid-template-columns:126px 94px 330px 217px 577px 500px 263px 124px 1fr;align-items:start;height:${d.h}px;background:${d.tone ? '#f3f0fa' : '#fff'};${d.line === 0 ? '' : 'border-bottom:3px solid #d9d5ec;'}flex:none;box-sizing:border-box}
      .c{min-width:0;display:flex;flex-direction:column}svg{display:block}
      .box{width:42px;height:42px;border:3px solid ${PU};border-radius:7px}
      .v{display:flex;align-items:flex-start} i{width:13.500px;height:13.500px;border-radius:50%;background:${P};flex:none}
      .x{width:43px;height:43px;border-radius:50%;background:#fff;margin-left:-8px;box-shadow:0 1px 5px rgba(60,50,100,.35)}`,
      Object.values(cells).map(c => `<div class="c">${c}</div>`).join(''));
  }
}
customElements.define('node-row', NodeRow);

const ROWS = [
 { y: 698, h: 134, par: ['MESH 2, 3', 2170.5, 2355, 772, 37, 700], lev: ['n', 2529, 180, 722, 2555, 2591, 86, 751.5, '65 cm / 80 cm', 170, 799.6], act: [722, 751, '5 L/s', 57, '/ 7 L/s', 9, 86, 803.5], blk: ['rggg', 737, 3443], more: 759 },
 { y: 832, h: 131, par: ['A', 2249.6, 2266, 901], lev: ['u', 2527, 197, 851, 2550, 2582, 123, 879.4, '15 cm / 40 cm', 166, 932], act: [856, 885, '1 L/s', 53, '/ 5 L/s', 9, 88, 935.8], blk: ['rrrr', 871.5, 3443], alr: ['#ff0000', 869, 3706], more: 894 },
 { y: 963, h: 135, chk: 1004, chev: 1026, name: ['Node C', 1039.5, 102, .5], par: ['A', 2249.6, 2266, 1050], lev: ['n', 2529, 180, 988, 2555, 2591, 86, 1016.4, '11 cm / 20 cm', 162, 1065.4], act: [987.5, 1016.4, '2 L/s', 57, '/ 3 L/s', 9, 88, 1069.3], blk: ['gggg', 1002, 3443], more: 1025 },
 { y: 1098, h: 124, tone: 1, line: 0, chk: 1139.5, chev: 1161, name: ['Node D', 1174, 103], par: ['B, C', 2237, 2284, 1164], ina: [2950.6, 1148], close: 1160.5 },
 { y: 1222, h: 139, chk: 1269, chkx: 45, chev: 1293.5, name: ['Node E', 1303, 99], par: ['D', 2249, 2264, 1305.6], lev: ['o', 2533, 174, 1251, 2552, 2573, 108, 1280, '20 cm / 20 cm', 170, 1330.8], act: [1254, 1282.6, '3.5 L/s', 80, '/ 3 L/s', 9, 87, 1334.7], blk: ['gggr', 1270, 3443], alr: ['#ff7a00', 1259, 3716.5] },
 { y: 1361, h: 135, tone: 1, chk: 1403, chev: 1424.5, name: ['Node F', 1429, 99], par: ['D, E', 2233, 2277, 1437], ina: [2957.7, 1422] },
 { y: 1496, h: 131, chk: 1537.6, chev: 1559, name: ['Node G', 1568.4, 104], par: ['F', 2250, 2263, 1571.5], lev: ['u', 2529, 212, 1519, 2552.5, 2584, 123.5, 1548, '5 cm / 40 cm', 154.6, 1596], act: [1519.5, 1548, '1 L/s', 53, '/ 5 L/s', 9, 88, 1599.6], blk: ['gggg', 1535.5, 3445], alr: ['#ff7a00', 1536, 3716.5], more: 1558 },
 { y: 1627, h: 143, line: 0, chk: 1668, chev: 1690, name: ['Node H', 1699.5, 103], par: ['G', 2248, 2265, 1703.6], lev: ['n', 2529, 180, 1651.5, 2555, 2591, 86, 1681, '17 cm / 20 cm', 165, 1729.4], act: [1652, 1681, '2 L/s', 57, '/ 3 L/s', 9, 88, 1733], blk: ['gggg', 1666, 3447.5], more: 1689 },
 { y: 1770, h: 133, tone: 1, chk: 1811.5, chev: 1833, name: ['Node I', 1836.7, 89], par: ['H', 2246, 2262, 1834.7], ina: [2960, 1823], more: 1832 }
];

class MouseArrow extends HTMLElement {
  connectedCallback() {
    make(this, `:host{display:block;position:absolute}svg{display:block;overflow:visible;filter:drop-shadow(0 2px 2px rgba(0,0,0,.3))}`,
      `<svg width="26" height="38" fill="#fff" stroke="#3c3c44" stroke-width="1.800" stroke-linejoin="round"><path d="M1 1V31L8 24.500L14 37L19 34.500L14 22.500L24 21.500Z"/></svg>`);
  }
}
customElements.define('mouse-arrow', MouseArrow);

class SortMenu extends HTMLElement {
  connectedCallback() {
    const opt = (t, w, on, b) => `<div class="o ${b}">${T(t, 28.5, 400, DK, w, { b: 41, x: 22.5, tr: 1 })}<b class="${on ? 'on' : ''}"></b></div>`;
    make(this, `:host{display:block;position:absolute;left:42px;top:131px;width:489px;height:394px;border:2px solid #c4bfde;border-radius:14px;
       background:linear-gradient(#f1f1f1,#fff 60px);box-shadow:0 12px 18px rgba(0,0,0,.22),0 2px 6px rgba(0,0,0,.12);padding:0 19px 0 21px;z-index:2;box-sizing:border-box}
      .o{display:flex;justify-content:space-between;align-items:flex-start;height:59px;border-radius:10px;padding-right:21px}
      .list{margin-top:14px}.hot{background:#f3f0fa}
      b{width:34px;height:34px;border-radius:50%;border:3.500px solid ${PU};margin-top:13px}
      b.on{border:11.500px solid #6d5bd0}
      mouse-arrow{left:278px;top:235px}`,
    T('SORT BY:', 24, 400, P, 121, { b: 68, x: 22.5, tr: 1 }) +
    `<div class="list">${opt('Default', 107, 1, '')}${opt('High Alert', 151, 0, '')}${opt('Low Alert', 144, 0, 'hot')}</div><mouse-arrow></mouse-arrow>`);
  }
}
customElements.define('sort-menu', SortMenu);

class ContextMenu extends HTMLElement {
  connectedCallback() {
    make(this, `:host{display:block;position:absolute;left:1992.600px;top:925.600px;z-index:3}
      .m{width:324px;height:219px;background:#fff;border-radius:12px;transform-origin:0 0;transform:rotate(-30.100deg);box-shadow:-4px 12px 36px rgba(0,0,0,.32);padding:15px 12px 0 6px}
      .a{height:55px;background:#f1eef9;border-radius:7px}.b{height:67px;border-bottom:2px solid #f1eef9}.a,.b,.c{display:flex;align-items:flex-start}
      mouse-arrow{left:233px;top:-80px}`,
    `<div class="m"><div class="a">${T('Previous Status', 28.5, 400, DK, 232, { b: 41, x: 13, tr: 1 })}</div><div class="b">${T('Detailed View', 28.5, 400, '#008a00', 203, { b: 42, x: 13, tr: 1 })}</div><div class="c">${T('Raise Alarm', 28.5, 400, '#ee0000', 173, { b: 54.5, x: 13, tr: 1 })}</div></div><mouse-arrow></mouse-arrow>`);
  }
}
customElements.define('context-menu', ContextMenu);

class NodeTable extends HTMLElement {
  connectedCallback() {
    const r = make(this, `:host{display:block;position:relative;width:2313px;height:1683px;clip-path:inset(-300px -38px -20px -300px)}
      .card{display:flex;flex-direction:column;height:1683px;background:#fff;border-radius:17px;box-shadow:0 22px 84px rgba(40,30,50,.21);}
      .bar{position:relative;height:156px;border-bottom:5px solid #d9d5ec;flex:none;display:flex;align-items:flex-start;padding:33px 46px 0 42px}
      .slot{height:89px;border-radius:14px;background:#f3f0fe;box-shadow:inset 0 0 6px rgba(60,50,110,.35)}
      .s1{width:185px}.s2{width:825px;margin-left:42px}
      .btn{margin-left:auto;margin-top:2px;width:444px;height:85px;border-radius:11px;background:#6f5ad6;display:flex;justify-content:flex-end;align-items:flex-start;padding-right:38px}
      .float{position:absolute;display:flex;align-items:flex-start;border:3.500px solid #6d5bd0;border-radius:12px}
      .fil{left:-20px;top:12px;width:184px;height:87px;background:#fff;box-shadow:0 0 6px rgba(80,60,200,.45),0 26px 50px 6px rgba(0,0,0,.27);padding:18px 0 0 17px}
      .sea{left:291px;top:-21px;width:823px;height:88px;background:#f4f2ff;box-shadow:0 0 6px rgba(80,60,200,.45),10px 40px 60px 8px rgba(0,0,0,.27);padding:17px 0 0 15px}
      .cur{width:2px;height:33px;background:#33303f;margin:8px 0 0 35px}
      .head{display:grid;grid-template-columns:550px 217px 527px 489px 302px 1fr;height:100px;background:#f4f2ff;border-bottom:3px solid #d9d5ec;flex:none;align-items:start}
      .head div{display:flex;flex-direction:column}
      svg{display:block;flex:none}`,
    `<div class="card"><div class="bar">
        <div class="slot s1"></div><div class="slot s2"></div>
        <div class="btn">${T('NODE DATA / MESH 4', 33, 600, '#fff', 349, { b: 54.5 })}</div>
        <div class="float sea"><svg width="56" height="60" fill="none" stroke="${PU}" stroke-width="5" stroke-linecap="round"><circle cx="20" cy="23" r="16.500"/><path d="M32 35L42.500 45"/></svg>${T('Node H', 32, 400, P, 115.5, { x: 12, b: 40 })}<div class="cur"></div></div>
        <div class="float fil"><svg width="44" height="46" fill="${PU}"><path d="M0 0H43V7Q40 15 26 25.500V36L17 44.500V25.500Q3 15 0 7Z"/></svg>${T('Filter', 33, 500, DK, 77, { x: 21, b: 34 })}</div>
      </div>
      <div class="head"><div></div><div>${T('PARENT NODES', 24.5, 600, P, 206.5, { x: 4, b: 55.5, tr: 1 })}</div>
        <div>${T('LEVEL / CAPACITY (cm)', 20, 600, P, 267, { x: 163, b: 52, tr: 1 })}</div>
        <div>${T('FLOW RATE / IDEAL FLOW RATE', 20.5, 600, P, 356, { x: 0.6, b: 49.5, tr: 1 })}${T('(L/s)', 20.5, 600, P, 49, { x: 155, mt: 3, tr: 1 })}</div>
        <div>${T('BLOCKAGE', 24.5, 600, P, 145, { x: 0, b: 55.5, tr: 1 })}</div><div>${T('ALERT', 24.5, 600, P, 84, { x: 0, b: 55.5, tr: 1 })}</div></div>
      <div id="rows"></div></div><sort-menu></sort-menu><context-menu></context-menu>`);
    const box = r.getElementById('rows');
    for (const d of ROWS) { const e = document.createElement('node-row'); e.data = d; box.append(e); }
  }
}
customElements.define('node-table', NodeTable);

class AppShell extends HTMLElement {
  connectedCallback() {
    make(this, `:host{display:flex;width:3950px;height:2242px;overflow:hidden;background:#f3f0fa}
      main{width:3740px;margin-left:1px;display:flex;flex-direction:column;position:relative;isolation:isolate}
      .dots{position:absolute;z-index:-1;background:radial-gradient(circle at 21px 21px,#e9e5f7 20.500px,transparent 21.500px) 0 0/98.750px 97px}
      .d1{left:-1px;top:1341px;width:1425px;height:901px}.d2{left:2809px;top:350px;width:931px;height:1400px}
      .body{display:flex;padding-left:20px}
      .left{width:1338px}.h{height:234px;padding-left:37px;display:flex}
      .right{margin-left:31px;width:2313px}
      .tabs{height:187px;border-bottom:3px solid #c9c1e8;padding-left:23px;display:flex}
      .line{width:78px;height:5px;background:#25213b;margin-bottom:43px}`,
    `<side-nav></side-nav><main><div class="dots d1"></div><div class="dots d2"></div><top-bar></top-bar>
      <div class="body"><section class="left"><div class="h">${T('Choose Area', 84, 500, '#000', 475, { b: 165, f: 'Roboto' })}</div><area-map></area-map></section>
      <section class="right"><div class="tabs">${T('All', 28, 500, DK, 32, { b: 158 })}</div><div class="line"></div><node-table></node-table></section></div></main>`);
  }
}
customElements.define('app-shell', AppShell);
</script>
</body>
</html>
